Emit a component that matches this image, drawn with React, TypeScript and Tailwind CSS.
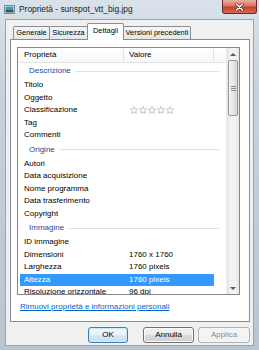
import React from 'react'

type Row =
  | { kind: 'group'; label: string }
  | { kind: 'item'; label: string; value?: string; stars?: boolean; selected?: boolean }

const rows: Row[] = [
  { kind: 'group', label: 'Descrizione' },
  { kind: 'item', label: 'Titolo' },
  { kind: 'item', label: 'Oggetto' },
  { kind: 'item', label: 'Classificazione', stars: true },
  { kind: 'item', label: 'Tag' },
  { kind: 'item', label: 'Commenti' },
  { kind: 'group', label: 'Origine' },
  { kind: 'item', label: 'Autori' },
  { kind: 'item', label: 'Data acquisizione' },
  { kind: 'item', label: 'Nome programma' },
  { kind: 'item', label: 'Data trasferimento' },
  { kind: 'item', label: 'Copyright' },
  { kind: 'group', label: 'Immagine' },
  { kind: 'item', label: 'ID immagine' },
  { kind: 'item', label: 'Dimensioni', value: '1760 x 1760' },
  { kind: 'item', label: 'Larghezza', value: '1760 pixels' },
  { kind: 'item', label: 'Altezza', value: '1760 pixels', selected: true },
  { kind: 'item', label: 'Risoluzione orizzontale', value: '96 dpi' },
]

function Star() {
  return (
    <svg width="8" height="8" viewBox="0 0 10 10" className="shrink-0">
      <polygon
        points="5,0.6 6.3,3.6 9.5,3.8 7.1,6 7.9,9.3 5,7.6 2.1,9.3 2.9,6 0.5,3.8 3.7,3.6"
        fill="#fbfbfb"
        stroke="#b4b4b4"
        strokeWidth="0.9"
        strokeLinejoin="round"
      />
    </svg>
  )
}

function FileIcon() {
  return (
    <svg width="11" height="9" viewBox="0 0 11 9">
      <rect x="0.5" y="0.5" width="10" height="8" fill="#f4f6f8" stroke="#7d8a96" />
      <rect x="1.5" y="1.5" width="8" height="3.5" fill="#3a9bc8" />
      <rect x="1.5" y="5" width="8" height="2.5" fill="#2f5a46" />
    </svg>
  )
}

function Tab({ label, w, selected }: { label: string; w: string; selected?: boolean }) {
  if (selected) {
    return (
      <div
        className={`${w} h-[17px] -ml-px -mb-px relative z-10 flex items-center justify-center border border-b-0 border-[#898c95] bg-white rounded-t-[2px] pb-[2px] whitespace-nowrap`}
      >
        {label}
      </div>
    )
  }
  return (
    <div
      className={`${w} h-[13px] -ml-px first:ml-[3px] flex items-center justify-center border border-b-0 border-[#898c95] bg-[linear-gradient(#f6f6f6,#e6e6e6)] rounded-t-[2px] whitespace-nowrap`}
    >
      {label}
    </div>
  )
}

function Button({ label, w, kind }: { label: string; w: string; kind?: 'default' | 'disabled' }) {
  const look =
    kind === 'disabled'
      ? 'border-[#adb2b5] bg-[#f4f4f4] text-[#8b8b8b]'
      : kind === 'default'
        ? 'border-[#3c7fb1] bg-[linear-gradient(#f2f8fc_0%,#e6f1f9_50%,#d4e8f6_50%,#c6e0f3_100%)] text-black shadow-[inset_0_0_0_1px_#c7ebfb]'
        : 'border-[#707070] bg-[linear-gradient(#f2f2f2_0%,#ebebeb_50%,#dddddd_50%,#cfcfcf_100%)] text-black shadow-[inset_0_0_0_1px_#fbfbfb]'
  return (
    <div className={`${w} h-[16px] rounded-[3px] border flex items-center justify-center ${look}`}>{label}</div>
  )
}

function ItemRow({ row }: { row: Extract<Row, { kind: 'item' }> }) {
  return (
    <div className="h-[12.5px] shrink-0 flex items-center pl-[2px]">
      <div
        className={`w-[194px] h-full flex items-center ${row.selected ? 'bg-[#3399ff] text-white' : 'text-black'}`}
      >
        <span className="w-[109px] pl-[4px] whitespace-nowrap overflow-hidden">{row.label}</span>
        {row.stars ? (
          <div className="flex gap-[1px] pl-[1px]">
            <Star />
            <Star />
            <Star />
            <Star />
            <Star />
          </div>
        ) : (
          <span className="whitespace-nowrap">{row.value}</span>
        )}
      </div>
    </div>
  )
}

function GroupRow({ label }: { label: string }) {
  return (
    <div className="h-[16px] shrink-0 flex items-center pl-[11px] pr-[7px]">
      <span className="text-[#2b4796] whitespace-nowrap">{label}</span>
      <div className="flex-1 h-px ml-[4px] bg-[#dce3ec]" />
    </div>
  )
}

function Scrollbar() {
  return (
    <div className="w-[13px] h-full flex flex-col bg-[linear-gradient(to_right,#e4e4e4,#f3f3f3_30%,#f3f3f3_70%,#e4e4e4)] border-l border-[#ececec]">
      <div className="h-[12px] flex items-center justify-center">
        <div className="w-0 h-0 border-l-[3px] border-r-[3px] border-b-[3px] border-l-transparent border-r-transparent border-b-[#5a5a5a]" />
      </div>
      <div className="h-[56px] mx-[1px] rounded-[2px] border border-[#979797] bg-[linear-gradient(to_right,#f3f3f3,#e8e8e8_50%,#d6d6d6)] flex flex-col items-center justify-center gap-[1px]">
        <div className="w-[5px] h-px bg-[#8a8a8a]" />
        <div className="w-[5px] h-px bg-[#8a8a8a]" />
        <div className="w-[5px] h-px bg-[#8a8a8a]" />
      </div>
      <div className="flex-1" />
      <div className="h-[12px] flex items-center justify-center">
        <div className="w-0 h-0 border-l-[3px] border-r-[3px] border-t-[3px] border-l-transparent border-r-transparent border-t-[#5a5a5a]" />
      </div>
    </div>
  )
}

export default function App() {
  return (
    <div className="w-[259px] h-[350px] flex flex-col overflow-hidden bg-[linear-gradient(#d9e2ea,#c6d2dd_25%,#b9c6d2)] font-['Liberation_Sans',Arial,sans-serif] text-[8px] leading-none text-black">
      {/* title bar */}
      <div className="h-[19px] shrink-0 flex items-start">
        <div className="pl-[4px] pt-[5px]">
          <FileIcon />
        </div>
        <div className="pl-[4px] pt-[5px] text-[8.4px] text-[#1c1c1c] whitespace-nowrap">Proprietà - sunspot_vtt_big.jpg</div>
        <div className="flex-1" />
        <div className="w-[35px] h-[14px] mr-[2px] rounded-b-[3px] border border-t-0 border-[#6d2a22] bg-[linear-gradient(#eab0a4,#d9735f_45%,#c2432c_55%,#d46a4b)] flex items-center justify-center">
          <svg width="9" height="8" viewBox="0 0 9 8">
            <path d="M1.5 1 L7.5 7 M7.5 1 L1.5 7" stroke="#5a1a12" strokeWidth="2.6" strokeLinecap="round" />
            <path d="M1.5 1 L7.5 7 M7.5 1 L1.5 7" stroke="#ffffff" strokeWidth="1.5" strokeLinecap="round" />
          </svg>
        </div>
      </div>

      {/* client area */}
      <div className="flex-1 mx-[5px] mb-[4px] border border-[#97a3af] bg-[#f0f0f0] flex flex-col">
        <div className="pt-[3px] pl-[4px]">
          <div className="h-[16px] flex items-end text-[7.4px]">
            <Tab label="Generale" w="w-[37px]" />
            <Tab label="Sicurezza" w="w-[39px]" />
            <Tab label="Dettagli" w="w-[37px]" selected />
            <Tab label="Versioni precedenti" w="w-[68px]" />
          </div>

          {/* tab panel */}
          <div className="w-[240px] h-[283px] border border-[#898c95] bg-white flex flex-col">
            <div className="ml-[6px] mt-[7px] w-[223px] h-[248px] border border-[#828790] flex">
              <div className="flex-1 flex flex-col overflow-hidden">
                <div className="h-[15px] shrink-0 flex border-b border-[#e2e4e7] bg-[linear-gradient(#ffffff,#f7f8fa)]">
                  <div className="w-[106px] pl-[6px] flex items-center border-r border-[#e2e4e7]">Proprietà</div>
                  <div className="w-[90px] pl-[5px] flex items-center border-r border-[#e2e4e7]">Valore</div>
                </div>
                <div className="flex-1 flex flex-col overflow-hidden">
                  {rows.map((r) =>
                    r.kind === 'group' ? <GroupRow key={r.label} label={r.label} /> : <ItemRow key={r.label} row={r} />,
                  )}
                </div>
              </div>
              <Scrollbar />
            </div>
            <div className="mt-[7px] pl-[9px] h-[10px] flex items-center">
              <span className="text-[#0066cc] underline whitespace-nowrap">Rimuovi proprietà e informazioni personali</span>
            </div>
          </div>
        </div>

        {/* buttons */}
        <div className="mt-[5px] pr-[3px] flex justify-end">
          <Button label="OK" w="w-[40px]" kind="default" />
          <div className="w-[15px]" />
          <Button label="Annulla" w="w-[51px]" />
          <div className="w-[4px]" />
          <Button label="Applica" w="w-[52px]" kind="disabled" />
        </div>
      </div>
    </div>
  )
}
